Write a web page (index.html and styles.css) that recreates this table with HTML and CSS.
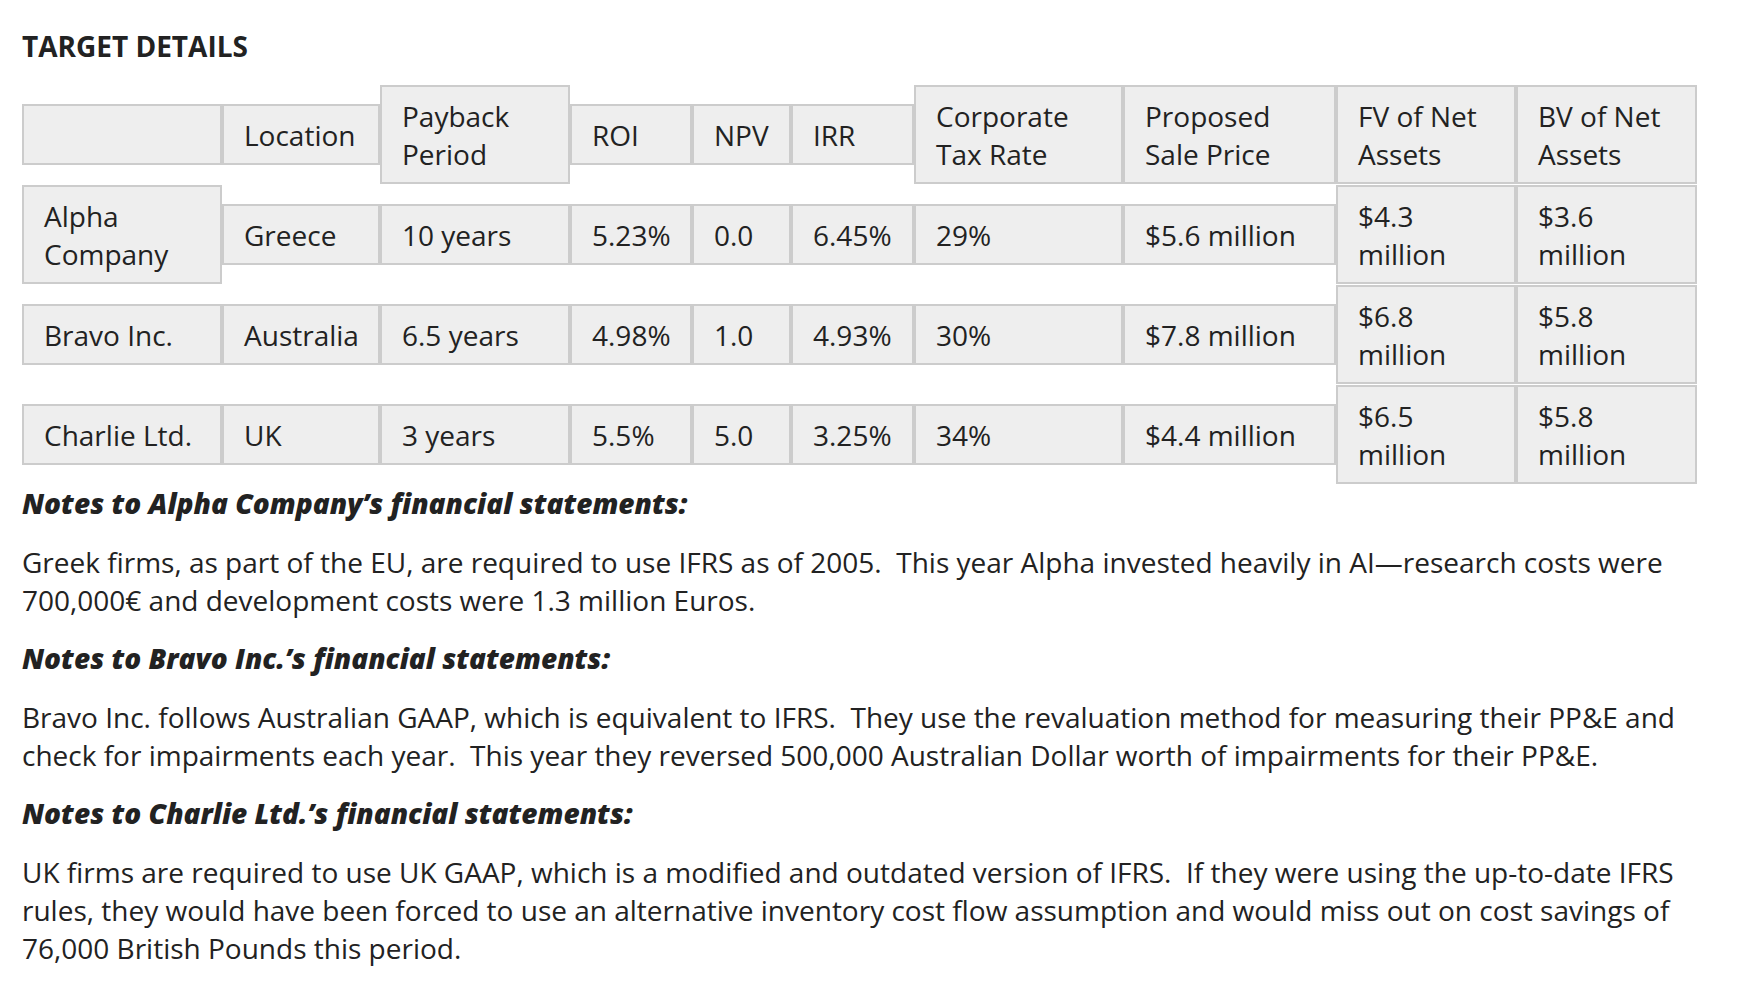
FILE: index.html
```html
<!DOCTYPE html>
<html lang="en">
<head>
<meta charset="utf-8">
<title>Target Details</title>
<link rel="stylesheet" href="styles.css">
</head>
<body>
<div class="page">
  <h2 class="title">TARGET DETAILS</h2>
  <div class="grid">
    <div class="row">
      <div class="cell w-name">&nbsp;</div>
      <div class="cell w-loc">Location</div>
      <div class="cell w-pay">Payback<br>Period</div>
      <div class="cell w-roi">ROI</div>
      <div class="cell w-npv">NPV</div>
      <div class="cell w-irr">IRR</div>
      <div class="cell w-tax">Corporate<br>Tax Rate</div>
      <div class="cell w-price">Proposed<br>Sale Price</div>
      <div class="cell w-fv">FV of Net<br>Assets</div>
      <div class="cell w-bv">BV of Net<br>Assets</div>
    </div>
    <div class="row">
      <div class="cell w-name">Alpha<br>Company</div>
      <div class="cell w-loc">Greece</div>
      <div class="cell w-pay">10 years</div>
      <div class="cell w-roi">5.23%</div>
      <div class="cell w-npv">0.0</div>
      <div class="cell w-irr">6.45%</div>
      <div class="cell w-tax">29%</div>
      <div class="cell w-price">$5.6 million</div>
      <div class="cell w-fv">$4.3<br>million</div>
      <div class="cell w-bv">$3.6<br>million</div>
    </div>
    <div class="row">
      <div class="cell w-name">Bravo Inc.</div>
      <div class="cell w-loc">Australia</div>
      <div class="cell w-pay">6.5 years</div>
      <div class="cell w-roi">4.98%</div>
      <div class="cell w-npv">1.0</div>
      <div class="cell w-irr">4.93%</div>
      <div class="cell w-tax">30%</div>
      <div class="cell w-price">$7.8 million</div>
      <div class="cell w-fv">$6.8<br>million</div>
      <div class="cell w-bv">$5.8<br>million</div>
    </div>
    <div class="row">
      <div class="cell w-name">Charlie Ltd.</div>
      <div class="cell w-loc">UK</div>
      <div class="cell w-pay">3 years</div>
      <div class="cell w-roi">5.5%</div>
      <div class="cell w-npv">5.0</div>
      <div class="cell w-irr">3.25%</div>
      <div class="cell w-tax">34%</div>
      <div class="cell w-price">$4.4 million</div>
      <div class="cell w-fv">$6.5<br>million</div>
      <div class="cell w-bv">$5.8<br>million</div>
    </div>
  </div>

  <p class="note-title">Notes to Alpha Company’s financial statements:</p>
  <p class="note">Greek firms, as part of the EU, are required to use IFRS as of 2005.&nbsp; This year Alpha invested heavily in AI—research costs were 700,000€ and development costs were 1.3 million Euros.</p>

  <p class="note-title">Notes to Bravo Inc.’s financial statements:</p>
  <p class="note">Bravo Inc. follows Australian GAAP, which is equivalent to IFRS.&nbsp; They use the revaluation method for measuring their PP&amp;E and check for impairments each year.&nbsp; This year they reversed 500,000 Australian Dollar worth of impairments for their PP&amp;E.</p>

  <p class="note-title">Notes to Charlie Ltd.’s financial statements:</p>
  <p class="note">UK firms are required to use UK GAAP, which is a modified and outdated version of IFRS.&nbsp; If they were using the up-to-date IFRS rules, they would have been forced to use an alternative inventory cost flow assumption and would miss out on cost savings of 76,000 British Pounds this period.</p>
</div>
</body>
</html>
```

FILE: styles.css
```css
html, body {
  margin: 0;
  padding: 0;
  background: #ffffff;
}

body {
  font-family: "Open Sans", "Noto Sans", sans-serif;
  font-size: 28px;
  line-height: 38px;
  color: #222222;
}

.page {
  width: 1675px;
  padding: 27px 0 0 22px;
}

.title {
  margin: 0 0 20px 0;
  font-size: 28px;
  line-height: 38px;
  font-weight: 700;
  color: #222222;
}

.grid {
  display: flex;
  flex-direction: column;
  gap: 1px;
}

.row {
  display: flex;
  align-items: center;
}

.cell {
  box-sizing: border-box;
  flex: none;
  background: #eeeeee;
  border: 2px solid #cccccc;
  padding: 9.5px 10px 9.5px 20px;
  white-space: nowrap;
}

.w-name  { width: 200px; }
.w-loc   { width: 158px; }
.w-pay   { width: 190px; }
.w-roi   { width: 122px; }
.w-npv   { width: 99px; }
.w-irr   { width: 123px; }
.w-tax   { width: 209px; }
.w-price { width: 213px; }
.w-fv    { width: 180px; }
.w-bv    { width: 181px; }

.note-title {
  margin: 0 0 21px 0;
  font-weight: 800;
  font-style: italic;
}

.note {
  margin: 0 0 20px 0;
}
```
